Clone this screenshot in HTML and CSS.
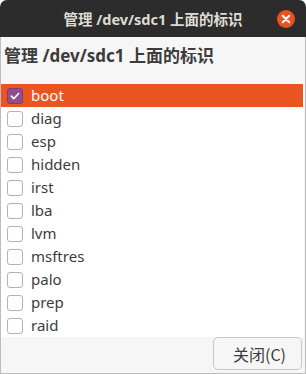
FILE: index.html
```html
<!DOCTYPE html>
<html>
<head>
<meta charset="utf-8">
<link rel="stylesheet" href="styles.css">
</head>
<body>
<div class="window">
  <div class="titlebar">
    <span class="title">管理 /dev/sdc1 上面的标识</span>
    <span class="close">
      <svg width="18" height="18" viewBox="0 0 18 18"><circle cx="9" cy="9" r="9" fill="#e95420"/><path d="M5.8 5.8 L12.2 12.2 M12.2 5.8 L5.8 12.2" stroke="#fff" stroke-width="2" stroke-linecap="round"/></svg>
    </span>
  </div>
  <div class="content">
    <h1 class="heading">管理 /dev/sdc1 上面的标识</h1>
    <ul class="list">
      <li class="row selected"><span class="box checked"><svg width="16" height="16" viewBox="0 0 16 16"><path d="M3.8 8.2 L6.6 11 L12.2 5.2" fill="none" stroke="#fff" stroke-width="1.8" stroke-linecap="round" stroke-linejoin="round"/></svg></span><span class="label">boot</span></li>
      <li class="row"><span class="box"></span><span class="label">diag</span></li>
      <li class="row"><span class="box"></span><span class="label">esp</span></li>
      <li class="row"><span class="box"></span><span class="label">hidden</span></li>
      <li class="row"><span class="box"></span><span class="label">irst</span></li>
      <li class="row"><span class="box"></span><span class="label">lba</span></li>
      <li class="row"><span class="box"></span><span class="label">lvm</span></li>
      <li class="row"><span class="box"></span><span class="label">msftres</span></li>
      <li class="row"><span class="box"></span><span class="label">palo</span></li>
      <li class="row"><span class="box"></span><span class="label">prep</span></li>
      <li class="row"><span class="box"></span><span class="label">raid</span></li>
    </ul>
    <div class="footer">
      <button class="btn">关闭(C)</button>
    </div>
  </div>
</div>
</body>
</html>
```
FILE: styles.css
```css
html, body {
  margin: 0;
  padding: 0;
  background: #ffffff;
}
body {
  font-family: "Noto Sans", "Noto Sans CJK SC", sans-serif;
}
.window {
  width: 306px;
  height: 374px;
  box-sizing: border-box;
  display: flex;
  flex-direction: column;
  background: #f6f6f6;
  border-radius: 7px 7px 0 0;
  overflow: hidden;
}
.titlebar {
  height: 37px;
  flex: none;
  background: #2c2c2c;
  display: flex;
  align-items: center;
  justify-content: center;
  position: relative;
}
.title {
  color: #dfdbd2;
  font-weight: bold;
  font-size: 14.5px;
  font-family: "Noto Sans", "Noto Sans CJK SC", sans-serif;
}
.close {
  position: absolute;
  left: 277px;
  top: 10px;
  width: 18px;
  height: 18px;
  display: block;
}
.close svg { display: block; }
.content {
  flex: 1;
  display: flex;
  flex-direction: column;
  border: 1px solid #bdbdbd;
  border-top: none;
  background: #f6f6f6;
}
.heading {
  margin: 0;
  padding: 7px 0 0 3px;
  height: 47px;
  box-sizing: border-box;
  font-size: 17px;
  line-height: 24px;
  font-weight: bold;
  color: #3c3c3c;
}
.list {
  list-style: none;
  margin: 0 1px 0 0;
  padding: 0 1px 0 0;
  background: #ffffff;
}
.row {
  height: 23px;
  display: flex;
  align-items: center;
  padding-left: 6px;
  color: #3c3c3c;
  font-size: 15px;
}
.row.selected {
  background: #e95420;
  color: #ffffff;
}
.box {
  width: 16px;
  height: 16px;
  box-sizing: border-box;
  border: 1px solid #b3b3b3;
  border-radius: 3px;
  background: #ffffff;
  flex: none;
  display: flex;
  align-items: center;
  justify-content: center;
}
.box.checked {
  background: #924d8b;
  border-color: #7a3f74;
}
.box svg { display: block; }
.label {
  margin-left: 8px;
  line-height: 23px;
}
.footer {
  flex: 1;
  display: flex;
  justify-content: flex-end;
  align-items: flex-start;
  padding-right: 3px;
}
.btn {
  width: 89px;
  height: 33px;
  margin-top: 0;
  border: 1px solid #cdc7c2;
  border-radius: 5px;
  background: #f6f6f6;
  color: #3c3c3c;
  font-family: "Noto Sans CJK SC", "Noto Sans", sans-serif;
  font-size: 16px;
  padding: 0 0 0 4px;
}
```
